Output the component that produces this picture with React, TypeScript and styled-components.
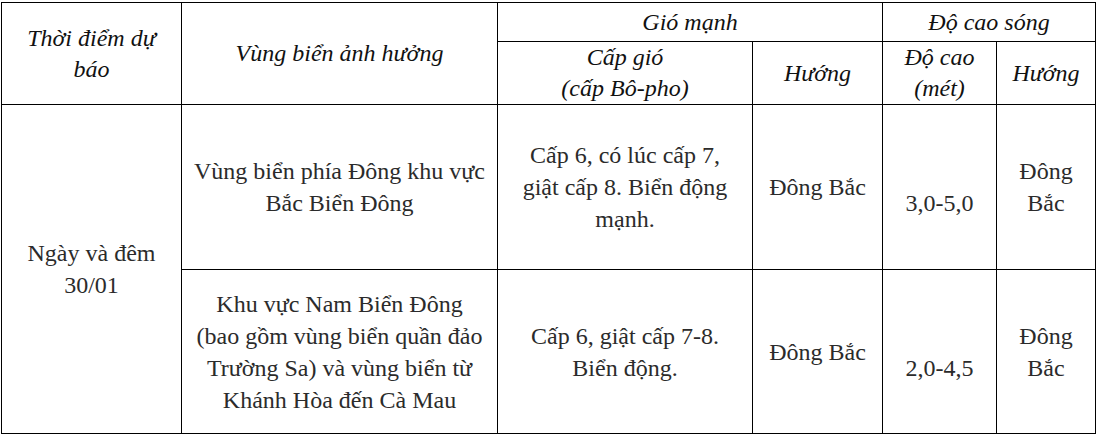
import styled, { createGlobalStyle } from "styled-components";

const GlobalStyle = createGlobalStyle`
  html, body {
    margin: 0;
    background: #fff;
  }
`;

const Table = styled.table`
  border-collapse: collapse;
  table-layout: fixed;
  width: 1095px;
  margin: 2px 0 0 1px;
  font-family: "Times New Roman", "Liberation Serif", "DejaVu Serif", serif;
  font-size: 24px;
  line-height: 32px;
  color: #2b2b2b;
`;

const HeadCell = styled.th<{ $h?: number }>`
  border: 1px solid #000;
  font-weight: normal;
  font-style: italic;
  color: #111;
  text-align: center;
  vertical-align: middle;
  line-height: 31px;
  padding: 0 14px;
  height: ${({ $h }) => ($h ? `${$h}px` : "auto")};
`;

const Cell = styled.td<{ $shift?: number }>`
  border: 1px solid #000;
  text-align: center;
  vertical-align: middle;
  padding: ${({ $shift }) => ($shift ? `${$shift}px` : "0")} 12px 0;
`;

const Row = styled.tr<{ $h: number }>`
  height: ${({ $h }) => $h}px;
`;

const widths = [180, 316, 255, 130, 114, 99];

const rows = [
  {
    area: "Vùng biển phía Đông khu vực Bắc Biển Đông",
    wind: "Cấp 6, có lúc cấp 7, giật cấp 8. Biển động mạnh.",
    dir: "Đông Bắc",
    wave: "3,0-5,0",
    waveDir: "Đông Bắc",
    h: 165,
  },
  {
    area: "Khu vực Nam Biển Đông (bao gồm vùng biển quần đảo Trường Sa) và vùng biển từ Khánh Hòa đến Cà Mau",
    wind: "Cấp 6, giật cấp 7-8. Biển động.",
    dir: "Đông Bắc",
    wave: "2,0-4,5",
    waveDir: "Đông Bắc",
    h: 164,
  },
];

export default function App() {
  return (
    <>
      <GlobalStyle />
      <Table>
        <colgroup>
          {widths.map((w, i) => (
            <col key={i} style={{ width: w }} />
          ))}
        </colgroup>
        <thead>
          <Row $h={39}>
            <HeadCell rowSpan={2}>Thời điểm dự báo</HeadCell>
            <HeadCell rowSpan={2}>Vùng biển ảnh hưởng</HeadCell>
            <HeadCell colSpan={2}>Gió mạnh</HeadCell>
            <HeadCell colSpan={2}>Độ cao sóng</HeadCell>
          </Row>
          <Row $h={63}>
            <HeadCell>
              Cấp gió
              <br />
              (cấp Bô-pho)
            </HeadCell>
            <HeadCell>Hướng</HeadCell>
            <HeadCell>
              Độ cao
              <br />
              (mét)
            </HeadCell>
            <HeadCell>Hướng</HeadCell>
          </Row>
        </thead>
        <tbody>
          {rows.map((r, i) => (
            <Row $h={r.h} key={i}>
              {i === 0 && (
                <Cell rowSpan={2}>
                  Ngày và đêm
                  <br />
                  30/01
                </Cell>
              )}
              <Cell>{r.area}</Cell>
              <Cell>{r.wind}</Cell>
              <Cell>{r.dir}</Cell>
              <Cell $shift={32}>{r.wave}</Cell>
              <Cell>{r.waveDir}</Cell>
            </Row>
          ))}
        </tbody>
      </Table>
    </>
  );
}
